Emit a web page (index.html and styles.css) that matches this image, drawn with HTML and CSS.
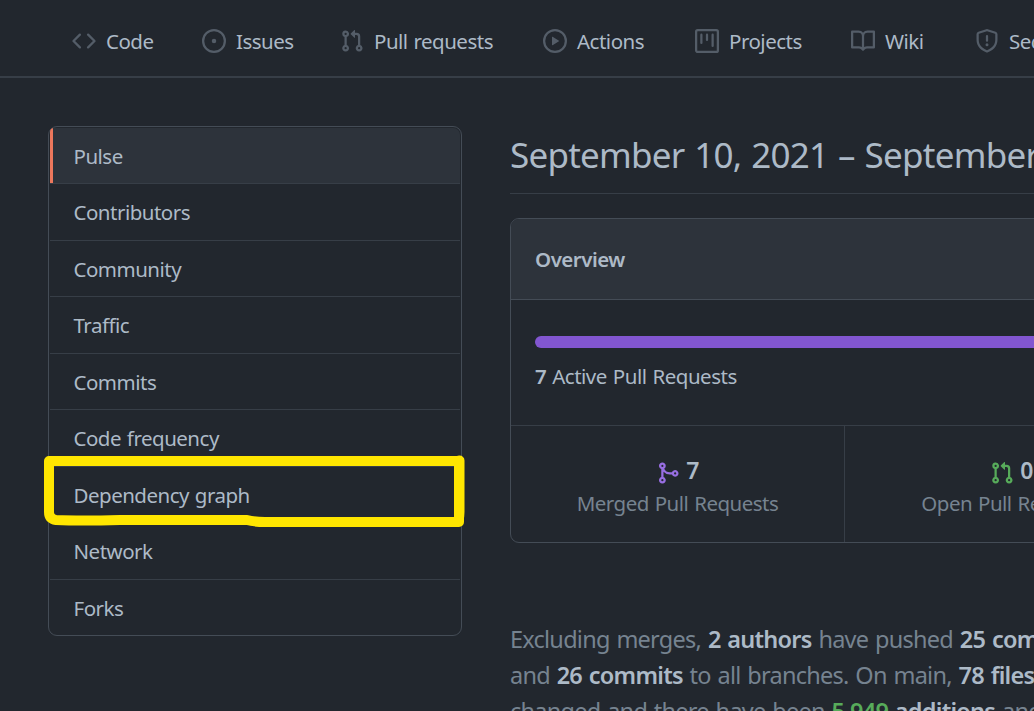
FILE: index.html
```html
<!DOCTYPE html>
<html lang="en">
<head>
<meta charset="utf-8">
<title>Pulse</title>
<link rel="stylesheet" href="styles.css">
</head>
<body>
<svg class="sprite" aria-hidden="true">
  <symbol id="pr" viewBox="0 0 16 16"><path fill-rule="evenodd" d="M7.177 3.073L9.573.677A.25.25 0 0110 .854v4.792a.25.25 0 01-.427.177L7.177 3.427a.25.25 0 010-.354zM3.75 2.5a.75.75 0 100 1.5.75.75 0 000-1.5zm-2.25.75a2.25 2.25 0 113 2.122v5.256a2.251 2.251 0 11-1.5 0V5.372A2.25 2.25 0 011.5 3.25zM11 2.5h-1V4h1a1 1 0 011 1v5.628a2.251 2.251 0 101.5 0V5A2.5 2.5 0 0011 2.5zm1 10.25a.75.75 0 111.5 0 .75.75 0 01-1.5 0zM3.75 12a.75.75 0 100 1.5.75.75 0 000-1.5z"/></symbol>
</svg>
<nav class="tabs">
  <a class="tab"><svg class="icon" viewBox="0 0 16 16"><path fill-rule="evenodd" d="M4.72 3.22a.75.75 0 011.06 1.06L2.06 8l3.72 3.72a.75.75 0 11-1.06 1.06L.47 8.53a.75.75 0 010-1.06l4.25-4.25zm6.56 0a.75.75 0 10-1.06 1.06L13.94 8l-3.72 3.72a.75.75 0 101.06 1.06l4.25-4.25a.75.75 0 000-1.06l-4.25-4.25z"/></svg><span>Code</span></a>
  <a class="tab"><svg class="icon" viewBox="0 0 16 16"><path d="M8 9.5a1.5 1.5 0 100-3 1.5 1.5 0 000 3z"/><path fill-rule="evenodd" d="M8 0a8 8 0 100 16A8 8 0 008 0zM1.5 8a6.5 6.5 0 1113 0 6.5 6.5 0 01-13 0z"/></svg><span>Issues</span></a>
  <a class="tab"><svg class="icon"><use href="#pr"/></svg><span>Pull requests</span></a>
  <a class="tab"><svg class="icon" viewBox="0 0 16 16"><path fill-rule="evenodd" d="M1.5 8a6.5 6.5 0 1113 0 6.5 6.5 0 01-13 0zM8 0a8 8 0 100 16A8 8 0 008 0zM6.379 5.227A.25.25 0 006 5.442v5.117a.25.25 0 00.379.214l4.264-2.559a.25.25 0 000-.428L6.379 5.227z"/></svg><span>Actions</span></a>
  <a class="tab"><svg class="icon" viewBox="0 0 16 16"><path fill-rule="evenodd" d="M1.75 0A1.75 1.75 0 000 1.75v12.5C0 15.216.784 16 1.75 16h12.5A1.75 1.75 0 0016 14.25V1.75A1.75 1.75 0 0014.25 0H1.75zM1.5 1.75a.25.25 0 01.25-.25h12.5a.25.25 0 01.25.25v12.5a.25.25 0 01-.25.25H1.75a.25.25 0 01-.25-.25V1.75zM11.75 3a.75.75 0 00-.75.75v7.5a.75.75 0 001.5 0v-7.5a.75.75 0 00-.75-.75zm-8.25.75a.75.75 0 011.5 0v5.5a.75.75 0 01-1.5 0v-5.5zM8 3a.75.75 0 00-.75.75v3.5a.75.75 0 001.5 0v-3.5A.75.75 0 008 3z"/></svg><span>Projects</span></a>
  <a class="tab"><svg class="icon" viewBox="0 0 16 16"><path fill-rule="evenodd" d="M0 1.75A.75.75 0 01.75 1h4.253c1.227 0 2.317.59 3 1.501A3.744 3.744 0 0111.006 1h4.245a.75.75 0 01.75.75v10.5a.75.75 0 01-.75.75h-4.507a2.25 2.25 0 00-1.591.659l-.622.621a.75.75 0 01-1.06 0l-.622-.621A2.25 2.25 0 005.258 13H.75a.75.75 0 01-.75-.75V1.75zm8.755 3a2.25 2.25 0 012.25-2.25H14.5v9h-3.757c-.71 0-1.4.201-1.992.572l.004-7.322zm-1.504 7.324l.004-5.073-.002-2.253A2.25 2.25 0 005.003 2.5H1.5v9h3.757a3.75 3.75 0 011.994.574z"/></svg><span>Wiki</span></a>
  <a class="tab"><svg class="icon" viewBox="0 0 16 16"><path fill-rule="evenodd" d="M7.467.133a1.75 1.75 0 011.066 0l5.25 1.68A1.75 1.75 0 0115 3.48V7c0 1.566-.32 3.182-1.303 4.682-.983 1.498-2.585 2.813-5.032 3.855a1.7 1.7 0 01-1.33 0c-2.447-1.042-4.049-2.357-5.032-3.855C1.32 10.182 1 8.566 1 7V3.48a1.755 1.755 0 011.217-1.667l5.25-1.68zm.61 1.429a.25.25 0 00-.153 0l-5.25 1.68a.25.25 0 00-.174.238V7c0 1.358.275 2.666 1.057 3.86.784 1.194 2.121 2.34 4.366 3.297a.2.2 0 00.154 0c2.245-.956 3.582-2.104 4.366-3.298C13.225 9.666 13.5 8.36 13.5 7V3.48a.25.25 0 00-.174-.237l-5.25-1.68zM9 10.5a1 1 0 11-2 0 1 1 0 012 0zm-.25-5.75a.75.75 0 10-1.5 0v3a.75.75 0 001.5 0v-3z"/></svg><span>Security</span></a>
</nav>
<div class="layout">
  <aside class="menu">
    <a class="item selected">Pulse</a>
    <a class="item">Contributors</a>
    <a class="item">Community</a>
    <a class="item">Traffic</a>
    <a class="item">Commits</a>
    <a class="item">Code frequency</a>
    <a class="item">Dependency graph</a>
    <a class="item">Network</a>
    <a class="item">Forks</a>
    <svg class="marker" viewBox="0 0 426 76"><path d="M9 9H419V70H225Q214 70 207 68H80Q40 69 16 68Q9 67 9 60V9M419.500 8.500V60Q419.500 68 417 69.500"/></svg>
  </aside>
  <main class="content">
    <h2 class="title">September 10, 2021 – September 17, 2021</h2>
    <section class="box">
      <h3 class="box-head">Overview</h3>
      <div class="progress-area">
        <div class="bar"></div>
        <p class="active"><b>7</b> Active Pull Requests</p>
      </div>
      <div class="stats">
        <div class="stat"><div class="count"><svg class="icon merged" viewBox="0 0 16 16"><path fill-rule="evenodd" d="M5 3.254V3.25v.005a.75.75 0 110-.005v.004zm.45 1.9a2.25 2.25 0 10-1.95.218v5.256a2.25 2.25 0 101.5 0V7.123A5.735 5.735 0 009.25 9h1.378a2.251 2.251 0 100-1.5H9.25a4.25 4.25 0 01-3.8-2.346zM12.75 9a.75.75 0 100-1.5.75.75 0 000 1.5zm-8.5 4.5a.75.75 0 100-1.5.75.75 0 000 1.5z"/></svg><b>7</b></div><span class="label">Merged Pull Requests</span></div>
        <div class="stat"><div class="count"><svg class="icon open"><use href="#pr"/></svg><b>0</b></div><span class="label">Open Pull Requests</span></div>
      </div>
    </section>
    <p class="summary">Excluding merges, <b>2 authors</b> have pushed <b>25 commits</b> to main<br>and <b>26 commits</b> to all branches. On main, <b>78 files</b> have<br>changed and there have been <b class="added">5,949</b> <b>additions</b> and</p>
  </main>
</div>
</body>
</html>
```
FILE: styles.css
```css
* { box-sizing: border-box; }
html { overflow: hidden; }
body {
  margin: 0;
  height: 711px;
  overflow: hidden;
  background: #22272e;
  color: #adbac7;
  font: 20.5px/30px "Noto Sans", "Open Sans", sans-serif;
  letter-spacing: -0.5px;
  word-spacing: 1px;
}
b { font-weight: 600; }
.sprite { display: none; }
.icon { width: 24px; height: 24px; fill: #545d68; flex: none; }
.tabs {
  display: grid;
  grid-template-columns: 130px 138px 203px 152px 156px 124px 130px;
  align-items: center;
  width: 1105px;
  height: 78px;
  padding: 6px 0 0 72px;
  border-bottom: 2px solid #373e47;
}
.tab { display: flex; align-items: center; gap: 10px; white-space: nowrap; }
.layout { display: flex; gap: 48px; padding: 48px 0 0 48px; width: 1526px; }
.menu {
  position: relative;
  flex: none;
  width: 414px;
  height: 510px;
  padding: 0.5px 1px 1px;
  border: 1px solid #444c56;
  border-radius: 9px;
}
.item {
  display: block;
  height: 56.5px;
  padding: 13px 24px 0 23.5px;
  border-bottom: 1px solid #373e47;
}
.item:nth-last-of-type(1) { border-bottom: 0; }
.selected {
  background: linear-gradient(90deg, #ec775c 3px, #2d333b 3px);
  border-radius: 4px 7px 0 0;
}
.marker {
  position: absolute;
  left: -9px;
  top: 325px;
  width: 426px;
  height: 76px;
  fill: none;
  stroke: #ffe600;
  stroke-width: 10;
  stroke-linejoin: round;
  stroke-linecap: round;
}
.content { flex: none; width: 1004px; }
.title {
  margin: 0 0 24px;
  height: 68px;
  padding-top: 2px;
  border-bottom: 1px solid #373e47;
  font-size: 35px;
  line-height: 54px;
  font-weight: 400;
  letter-spacing: -0.75px;
  word-spacing: 1.4px;
  white-space: nowrap;
}
.box { height: 325px; border: 1px solid #444c56; border-radius: 9px; overflow: hidden; }
.box-head {
  margin: 0;
  height: 81px;
  padding: 25px 24px;
  border-bottom: 1px solid #444c56;
  background: #2d333b;
  font-size: 20.5px;
  font-weight: 600;
}
.progress-area { height: 125px; padding: 36px 24px 0; }
.bar { height: 12px; border-radius: 6px; background: #8256d0; }
.active { margin: 13px 0 0; letter-spacing: -0.47px; }
.stats { display: flex; height: 118px; border-top: 1px solid #373e47; }
.stat { width: 334px; padding-top: 28px; text-align: center; border-right: 1px solid #373e47; }
.count { display: flex; justify-content: center; gap: 6px; height: 34px; font-size: 23px; line-height: 33px; }
.count .icon { margin-top: 7px; }
.count .merged { fill: #986ee2; }
.count .open { fill: #57ab5a; }
.label { color: #768390; }
.summary { margin: 78px 0 0; color: #768390; font-size: 23.5px; line-height: 36px; letter-spacing: -0.75px; word-spacing: 1.4px; white-space: nowrap; }
.summary b { color: #adbac7; }
.summary .added { color: #57ab5a; }
```
